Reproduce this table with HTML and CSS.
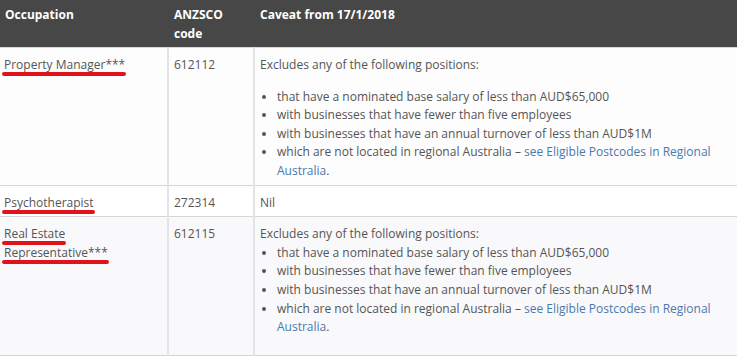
FILE: index.html
```html
<!DOCTYPE html>
<html lang="en">
<head>
<meta charset="utf-8">
<title>Occupations</title>
<link rel="stylesheet" href="styles.css">
</head>
<body>
<table class="occ-table">
  <colgroup>
    <col class="col-occ">
    <col class="col-code">
    <col class="col-caveat">
  </colgroup>
  <thead>
    <tr>
      <th>Occupation</th>
      <th>ANZSCO<br>code</th>
      <th>Caveat from 17/1/2018</th>
    </tr>
  </thead>
  <tbody>
    <tr class="row-a">
      <td><span class="mark">Property Manager***</span></td>
      <td>612112</td>
      <td>
        <p class="lead spaced">Excludes any of the following positions:</p>
        <ul class="caveats">
          <li>that have a nominated base salary of less than AUD$65,000</li>
          <li>with businesses that have fewer than five employees</li>
          <li>with businesses that have an annual turnover of less than AUD$1M</li>
          <li>which are not located in regional Australia – <a href="#">see Eligible Postcodes in Regional</a><br><a href="#">Australia</a>.</li>
        </ul>
      </td>
    </tr>
    <tr class="row-b">
      <td><span class="mark">Psychotherapist</span></td>
      <td>272314</td>
      <td>Nil</td>
    </tr>
    <tr class="row-c">
      <td><span class="mark">Real Estate</span><br><span class="mark">Representative***</span></td>
      <td>612115</td>
      <td>
        <p class="lead">Excludes any of the following positions:</p>
        <ul class="caveats last">
          <li>that have a nominated base salary of less than AUD$65,000</li>
          <li>with businesses that have fewer than five employees</li>
          <li>with businesses that have an annual turnover of less than AUD$1M</li>
          <li>which are not located in regional Australia – <a href="#">see Eligible Postcodes in Regional</a><br><a href="#">Australia</a>.</li>
        </ul>
      </td>
    </tr>
  </tbody>
</table>
</body>
</html>
```
FILE: styles.css
```css
html, body {
  margin: 0;
  padding: 0;
  background: #ffffff;
}

body {
  font-family: "Open Sans", "Liberation Sans", sans-serif;
  font-size: 12px;
  color: #555555;
}

.occ-table {
  width: 737px;
  border-collapse: collapse;
  table-layout: fixed;
}

.col-occ { width: 168px; }
.col-code { width: 86px; }
.col-caveat { width: auto; }

.occ-table th {
  background: #474747;
  color: #ffffff;
  font-weight: 700;
  text-align: left;
  vertical-align: top;
  line-height: 19px;
  padding: 5px 5px 4px 5px;
  border-bottom: 1px solid #d8d8d8;
}

.occ-table th + th {
  padding-left: 6px;
}

.occ-table td {
  vertical-align: top;
  line-height: 18.6px;
  padding: 8px 5px 4px 5px;
  border-bottom: 1px solid #d6d6d6;
}

.occ-table td + td {
  border-left: 2px solid #e4e4e6;
  padding-left: 5px;
}

.occ-table td:first-child {
  padding-left: 4px;
}

.row-a td { background: #fdfdfd; }
.row-b td { background: #ffffff; }
.row-c td { background: #f9f9fb; }

.lead {
  margin: 0;
}

.lead.spaced {
  margin-bottom: 13px;
}

.caveats {
  margin: 0;
  padding-left: 17px;
}

.caveats.last {
  margin-bottom: 14px;
}

.caveats a {
  color: #4a79ad;
  text-decoration: none;
}

.mark {
  position: relative;
}

.mark::after {
  content: "";
  position: absolute;
  left: -2px;
  right: -1px;
  bottom: -3px;
  height: 4px;
  border-radius: 2px;
  background: #e0131c;
}
```
